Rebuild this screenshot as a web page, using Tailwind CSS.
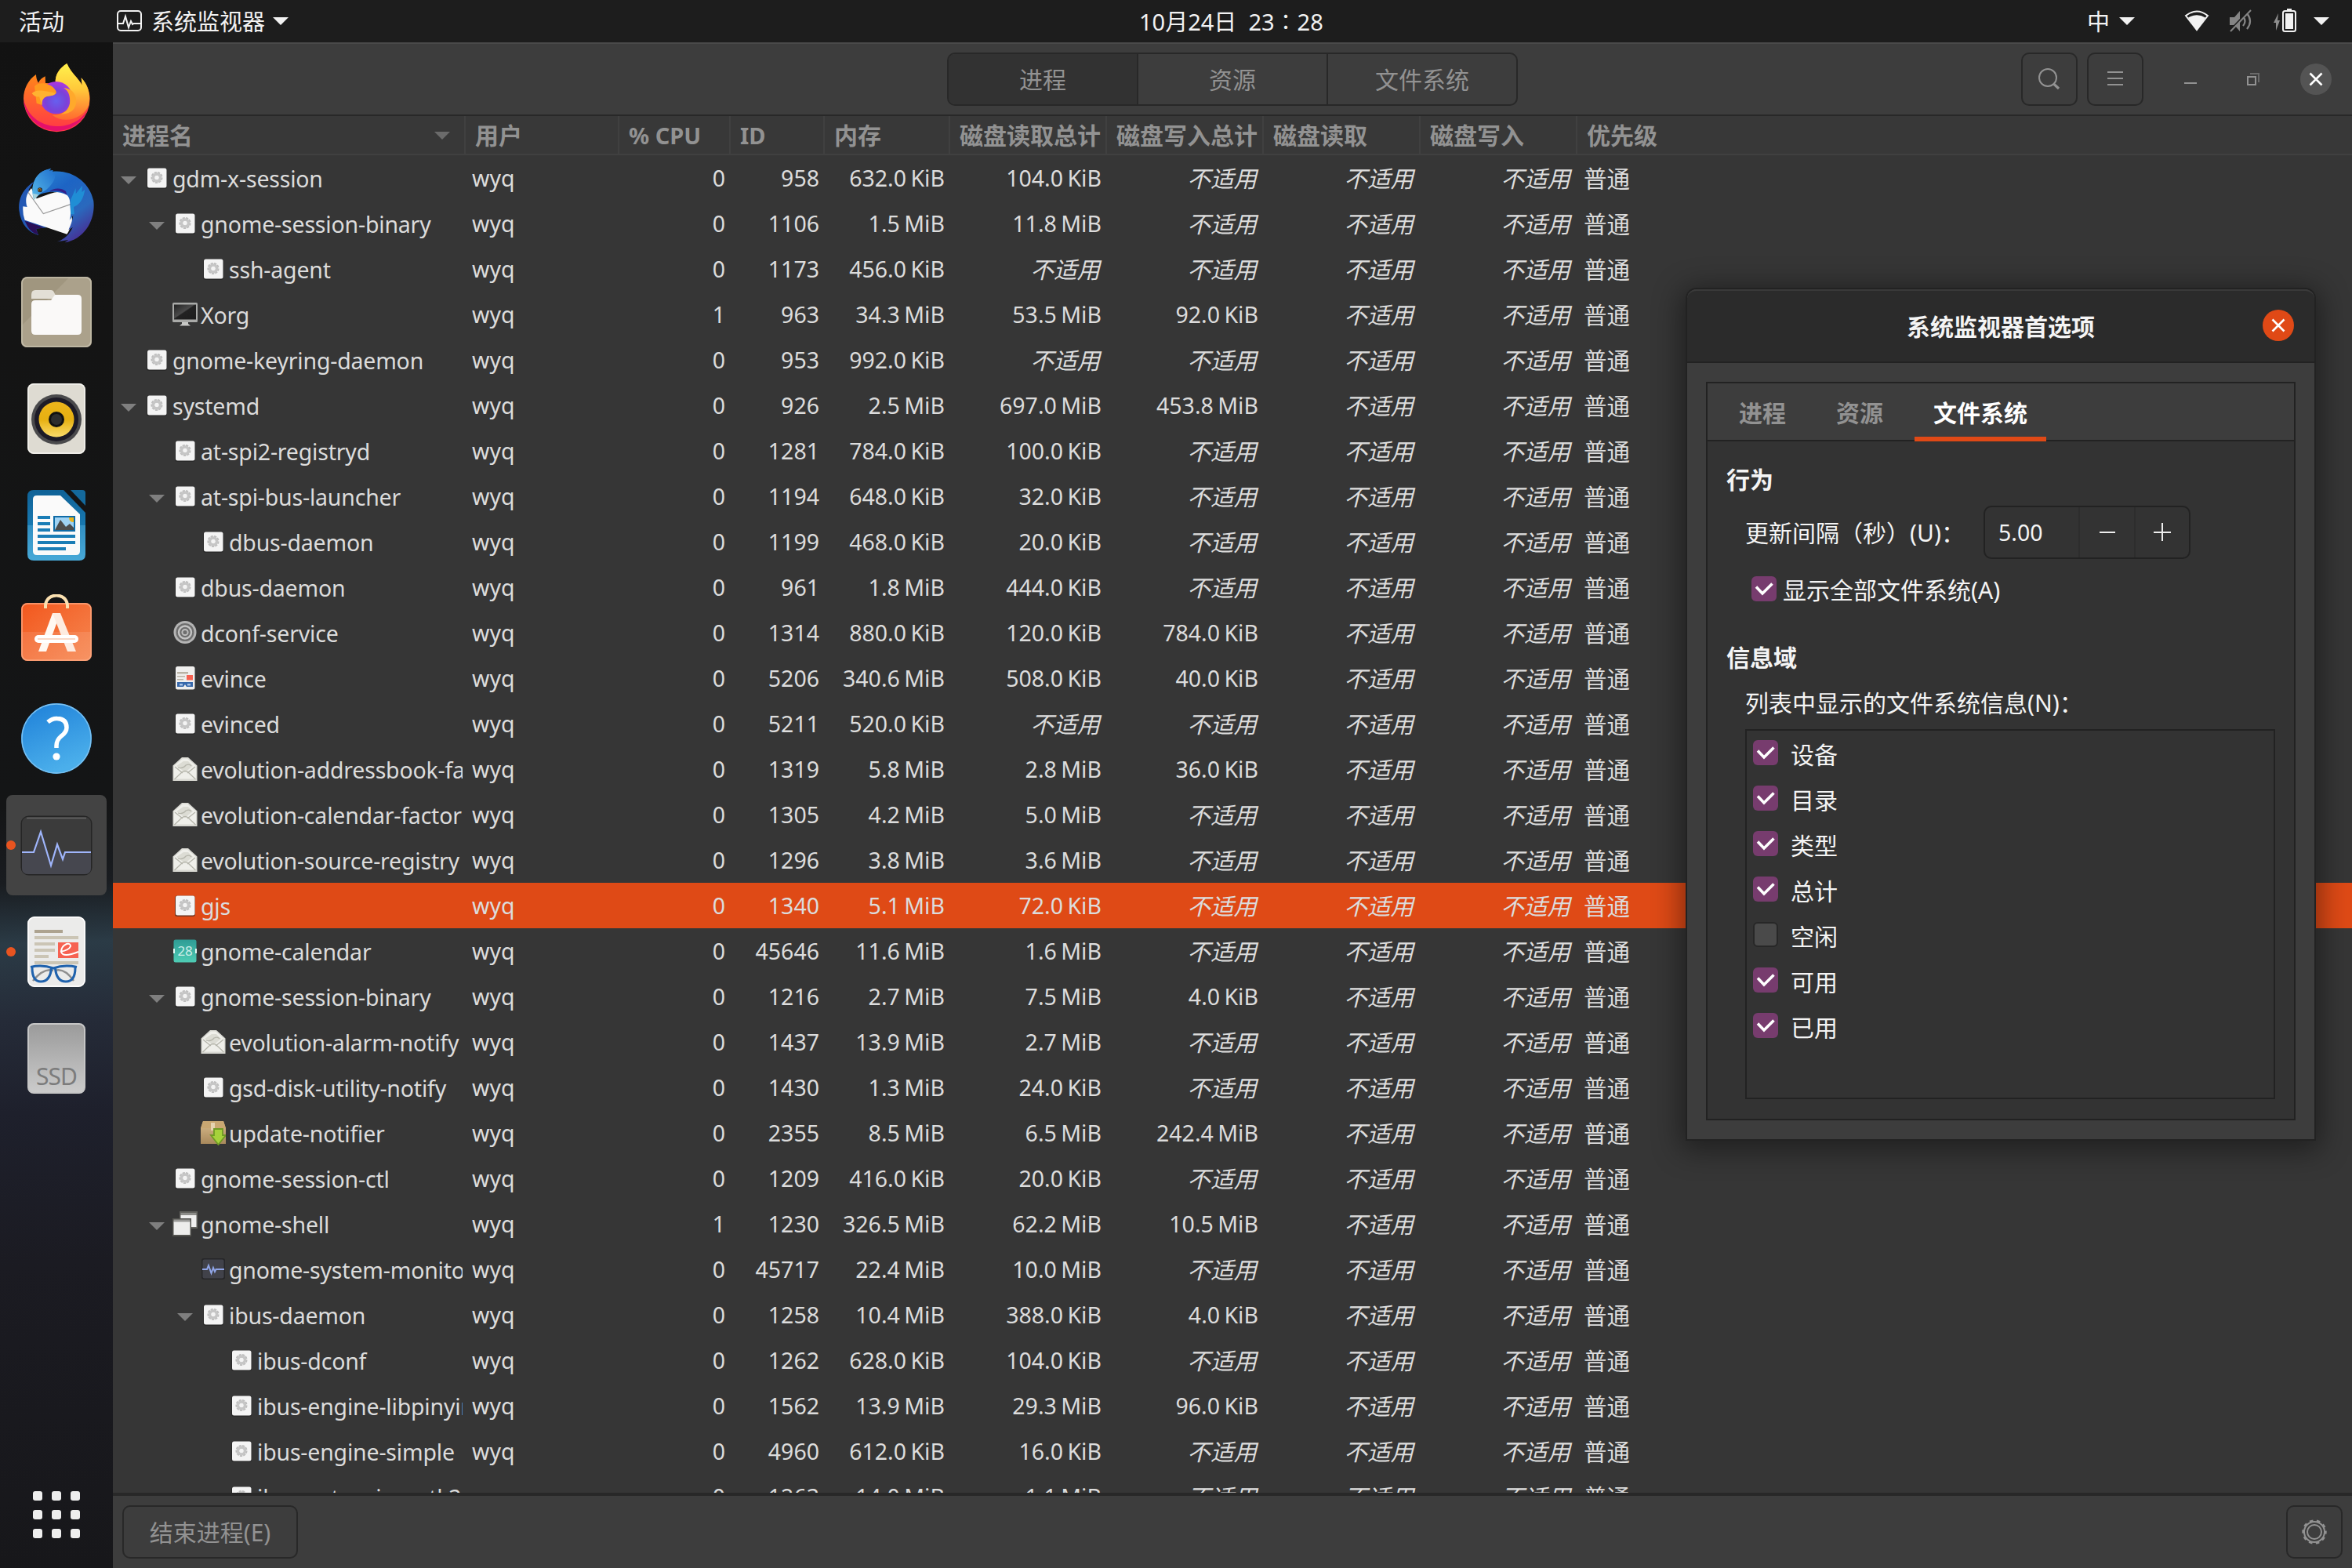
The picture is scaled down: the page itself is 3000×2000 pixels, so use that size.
<!DOCTYPE html>
<html lang="zh-CN">
<head>
<meta charset="utf-8">
<title>系统监视器</title>
<script src="https://cdn.jsdelivr.net/npm/@tailwindcss/browser@4"></script>
</head>
<body class="relative flex h-[2000px] w-[3000px] flex-col overflow-hidden bg-[#1d1d1d] font-['Noto_Sans','Noto_Sans_CJK_SC',sans-serif] text-[30px] text-[#dcdcdc]">

<!-- shared row icons -->
<svg class="absolute h-0 w-0" aria-hidden="true">
  <defs>
    <linearGradient id="gMon" x1="0" y1="0" x2="1" y2="1"><stop offset="0" stop-color="#222"/><stop offset=".45" stop-color="#4a4a4a"/><stop offset=".5" stop-color="#222"/><stop offset="1" stop-color="#1c1c1c"/></linearGradient>
    <linearGradient id="gBox" x1="0" y1="0" x2="0" y2="1"><stop offset="0" stop-color="#d9bc8c"/><stop offset="1" stop-color="#a8895c"/></linearGradient>
    <linearGradient id="gCal" x1="0" y1="0" x2="0" y2="1"><stop offset="0" stop-color="#2f9c95"/><stop offset="1" stop-color="#4fcdb5"/></linearGradient>
  </defs>
  <symbol id="i-exec" viewBox="0 0 32 32">
    <rect x="3" y="3.500" width="26" height="26.500" rx="3" fill="#222" opacity=".6"/>
    <rect x="4" y="3.500" width="24.500" height="25" rx="2.500" fill="#f4f4f4"/>
    <circle cx="16" cy="15.500" r="5.300" fill="none" stroke="#bdbdbd" stroke-width="4.500" stroke-dasharray="2.600 1"/>
    <circle cx="16" cy="15.500" r="4.500" fill="none" stroke="#c6c6c6" stroke-width="3.400"/>
  </symbol>
  <symbol id="i-screen" viewBox="0 0 32 32">
    <rect x="0" y="1" width="32" height="25" rx="1.500" fill="#a9aaa8"/>
    <rect x="2" y="3.500" width="28" height="19" fill="url(#gMon)"/>
    <path d="M12 26h8v2l3 2.500H9l3-2.500z" fill="#c8c8c6"/>
  </symbol>
  <symbol id="i-dconf" viewBox="0 0 32 32">
    <circle cx="16" cy="15.500" r="14.500" fill="#b4b4b4"/>
    <circle cx="16" cy="15.500" r="11.500" fill="#6e6e6e"/>
    <circle cx="16" cy="15.500" r="8" fill="none" stroke="#c4c4c4" stroke-width="2.400"/>
    <circle cx="16" cy="15.500" r="3.600" fill="none" stroke="#bdbdbd" stroke-width="2"/>
  </symbol>
  <symbol id="i-evince" viewBox="0 0 32 32">
    <rect x="4" y="1" width="24.500" height="29.500" rx="2.500" fill="#f0efee"/>
    <path d="M6 8h14v2.500H6zM6 13h10v1.500H6zM6 17h8v1.500H6z" fill="#b9b3a5"/>
    <rect x="18" y="12" width="8" height="6.500" fill="#f66151"/>
    <path d="M6 21h20v6h-8l-2-3-2 3H6z" fill="#3768ab"/>
    <path d="M9 23h4v2.500H9zM19 23h4v2.500h-4z" fill="#a9c2e6"/>
  </symbol>
  <symbol id="i-mail" viewBox="0 0 32 32">
    <path d="M.5 11.500 12 1h8l11.500 10.500V31H.5z" fill="#d9d9d3"/>
    <path d="M2 12 13 2.500h6L30 12v16.500H2z" fill="#efefea"/>
    <path d="M5 12 14 6h6l6 6-10 8z" fill="#dcdcd4"/>
    <path d="M7 14q6 2 10-3 5-2 7 1M2.500 29l9.500-9q4-3 8 0l9.500 9M3 13l10 8M29 13l-10 8" fill="none" stroke="#b5b5ab" stroke-width="1.300"/>
  </symbol>
  <symbol id="i-cal" viewBox="0 0 32 32">
    <rect x="1.500" y="1.500" width="29" height="29" rx="2.500" fill="url(#gCal)"/>
    <text x="16" y="21.500" text-anchor="middle" font-size="17" fill="#cfeee9">28</text>
    <path d="M2 13v6M30 13v6" stroke="#e5f6f3" stroke-width="2"/>
  </symbol>
  <symbol id="i-update" viewBox="0 0 32 32">
    <path d="M3 1h26l3 9v20H0V10z" fill="url(#gBox)"/>
    <path d="M3 1h26l3 9H0z" fill="#c9a772"/>
    <path d="M13 3h5v10h-5z" fill="#e6d3b1"/>
    <path d="M17 11h11v8h4L22.500 31 13 19h4z" fill="#a6d23b" stroke="#6f9a25" stroke-width="1.800"/>
  </symbol>
  <symbol id="i-shell" viewBox="0 0 32 32">
    <path d="M9 0h23v22H9z" fill="#62625e"/><path d="M10.500 5h20v15h-20z" fill="#efefef"/>
    <path d="M10.500 2h20v3h-20z" fill="#8d8d8a"/>
    <path d="M0 9h24v23H0z" fill="#53534f"/><path d="M1.500 13h21v17h-21z" fill="#ededec"/><path d="M1.500 10.500h21v3h-21z" fill="#9a9a98"/>
  </symbol>
  <symbol id="i-sysmon" viewBox="0 0 32 32">
    <rect x="1" y="2" width="30" height="27" rx="3" fill="#262628"/>
    <rect x="2.500" y="3.500" width="27" height="24" rx="2" fill="#41424a"/>
    <path d="M2 16h6l2-5 3.500 10 2.500-7 2 5 1.500-3H30" fill="none" stroke="#8fa4e6" stroke-width="2"/>
  </symbol>
  <symbol id="i-check" viewBox="0 0 32 32">
    <path d="M6 13.500 14 22 26.500 9.500" fill="none" stroke="#fff" stroke-width="3.600"/>
  </symbol>
</svg>

<!-- top panel -->
<header class="flex h-[54px] shrink-0 items-center bg-[#1d1d1d] text-[29px] text-[#f2f2f2]">
  <div class="flex w-[1453px] items-center pl-6">
    <span class="pt-0.5 leading-[54px]">活动</span>
    <svg class="ml-[67px] h-8 w-8" viewBox="0 0 32 32" fill="none" stroke="#f2f2f2" stroke-width="2"><rect x="1" y="3" width="30" height="25" rx="4"/><path d="M2 19h6l3-9 4 14 3-8 2 4 1.500-1H30"/></svg>
    <span class="ml-3 pt-0.5 leading-[54px]">系统监视器</span>
    <svg class="ml-2.5 h-2.5 w-5" viewBox="0 0 20 10"><path d="M0 0h20L10 10z" fill="#f2f2f2"/></svg>
  </div>
  <div class="pt-0.5 leading-[54px] whitespace-pre">10月24日  23∶28</div>
  <div class="ml-auto flex items-center pr-[29px]">
    <span class="pt-0.5 leading-[54px]">中</span>
    <svg class="ml-3 h-2.5 w-5" viewBox="0 0 20 10"><path d="M0 0h20L10 10z" fill="#f2f2f2"/></svg>
    <svg class="ml-[63px] h-8 w-8" viewBox="0 0 32 32"><path d="M2 9Q16-2 30 9L16 27z" fill="none" stroke="#f2f2f2" stroke-width="2"/><path d="M5 11.500Q16 5 27 11.500L16 28z" fill="#f2f2f2"/></svg>
    <svg class="ml-[25px] h-8 w-8" viewBox="0 0 32 32"><path d="M1 11h6l7-8v26l-7-8H1z" fill="#858585"/><path d="M18 10q5 6 0 12M23 6q8 10 0 20" fill="none" stroke="#858585" stroke-width="2.200"/><path d="M26 2 0 29" stroke="#1d1d1d" stroke-width="2"/><path d="M28 2 2 29" stroke="#858585" stroke-width="2"/></svg>
    <svg class="ml-6 h-8 w-8" viewBox="0 0 32 32"><path d="M7 6 1 18h3v10l5-13H6z" fill="#8d8d8d"/><path d="M18 0h6v3h-6z" fill="#f2f2f2"/><rect x="13" y="3" width="16" height="26" rx="2.500" fill="none" stroke="#f2f2f2" stroke-width="2"/><path d="M16 6h10v20H16z" fill="#f2f2f2"/></svg>
    <svg class="ml-5 h-2.5 w-5" viewBox="0 0 20 10"><path d="M0 0h20L10 10z" fill="#f2f2f2"/></svg>
  </div>
</header>

<div class="flex min-h-0 flex-1">

<!-- dock -->
<nav class="flex w-36 shrink-0 flex-col items-center gap-2 bg-[linear-gradient(178deg,#121212_0,#141414_18%,#141516_50%,#191c20_55%,#2b3b46_59%,#252b38_64%,#1e202c_70%,#1b1b22_80%,#17171a_100%)] pt-2">
  <div class="flex h-32 w-32 items-center justify-center">
    <svg class="h-24 w-24" viewBox="72 54 288 288">
      <defs>
        <radialGradient id="ff2" cx=".5" cy=".6" r=".65"><stop offset="0" stop-color="#6660ef"/><stop offset=".5" stop-color="#7a42d8"/><stop offset="1" stop-color="#b833e0"/></radialGradient>
        <linearGradient id="ff3" x1="0" y1="0" x2="0" y2="1"><stop offset="0" stop-color="#ff980e"/><stop offset=".45" stop-color="#ff6a2a"/><stop offset="1" stop-color="#ff3647"/></linearGradient>
        <linearGradient id="ff4" x1="0" y1="0" x2="0" y2="1"><stop offset="0" stop-color="#fff24d"/><stop offset=".45" stop-color="#ffc93a"/><stop offset="1" stop-color="#ff6a2f"/></linearGradient>
      </defs>
      <path d="M138 105C108 125 90 160 90 198A127 127 0 0 0 344 198C344 168 330 138 311 118L314 146C300 118 272 100 256 63C228 80 208 108 213 140L174 138L173 112C160 118 152 126 147 137C141 128 138 115 138 105Z" fill="url(#ff3)"/>
      <path d="M256 63C228 80 208 108 213 140C250 150 268 190 268 225C250 255 220 262 200 260C250 300 320 270 340 222C348 180 335 142 311 118L314 146C300 118 272 100 256 63Z" fill="url(#ff4)"/>
      <path d="M90 200A127 127 0 0 0 340 225C322 282 262 305 215 303C152 300 105 262 90 200Z" fill="#e5106b"/>
      <circle cx="215" cy="194" r="62" fill="url(#ff2)"/>
      <path d="M132 150C150 130 190 140 205 156C213 165 218 172 214 178C205 187 195 186 182 188C165 192 158 205 161 222L140 215Z" fill="#ff9a1e"/>
      <path d="M122 178C135 160 165 166 213 176C205 187 192 187 180 188C165 192 160 205 161 222C155 205 152 196 150 190C140 192 130 188 122 178Z" fill="#ffb231"/>
      <path d="M243 157C262 165 270 190 267 215C262 238 248 252 232 256C268 258 292 240 292 205C290 175 270 158 243 157Z" fill="#ffa92b"/>
    </svg>
  </div>
  <div class="flex h-32 w-32 items-center justify-center">
    <svg class="h-24 w-24" viewBox="72 462 288 288">
      <defs>
        <linearGradient id="tb1" x1="0" y1="0" x2=".6" y2="1"><stop offset="0" stop-color="#2c8bd6"/><stop offset=".4" stop-color="#1d64c4"/><stop offset=".75" stop-color="#2a69bd"/><stop offset="1" stop-color="#43379a"/></linearGradient>
        <linearGradient id="tb2" x1="0" y1="1" x2="1" y2="0"><stop offset="0" stop-color="#57b9e8"/><stop offset="1" stop-color="#1f6fce"/></linearGradient>
      </defs>
      <path d="M130 515C90 540 68 580 73 625C80 680 110 710 147 720L138 695L180 690L120 600L110 545Z" fill="#2258b4"/>
      <path d="M95 665C110 700 125 712 147 718L137 696L168 690Z" fill="#2a0f57"/>
      <path d="M120 540C98 565 96 590 104 612L88 610Q86 640 95 662L256 716Q268 700 276 670L272 566Q230 545 190 562L140 580Z" fill="#fafafa"/>
      <path d="M108 556 166 638 272 601" fill="none" stroke="#9a9a9a" stroke-width="3.500"/>
      <path d="M130 576C128 560 122 548 128 522C136 492 160 470 196 465L188 473L203 472L200 476C280 468 345 520 358 590C366 660 325 735 248 748L262 738L219 745C250 735 268 712 278 690L262 700C272 680 276 665 280 645L266 662C274 640 268 620 268 600C268 580 262 572 256 566C225 550 170 548 130 576Z" fill="url(#tb1)"/>
      <path d="M188 554C215 545 240 552 256 566L252 552C235 538 205 538 188 554Z" fill="#33208a"/>
      <path d="M130 584C122 560 122 540 128 522C136 492 160 470 196 465L188 473L203 472L200 480C230 490 190 545 160 556Z" fill="url(#tb2)"/>
      <path d="M270 585 290 540 290 562 315 530 313 555 325 545C318 590 300 605 282 612L284 640 270 640Z" fill="#1f9bdc" opacity=".75"/>
      <path d="M126 560 147 565 129 587Z" fill="#a9d3dc"/>
      <circle cx="153" cy="547" r="9" fill="#1b1b2b"/><circle cx="152" cy="547" r="6" fill="#d9982a"/><circle cx="152" cy="547" r="3.500" fill="#111"/>
    </svg>
  </div>
  <div class="flex h-32 w-32 items-center justify-center">
    <svg class="h-24 w-24" viewBox="0 0 96 96">
      <rect x="3" y="3" width="90" height="90" rx="8" fill="#a0967f"/><path d="M65 3H85q8 0 8 8V85q0 8-8 8H11q-8 0-8-8V66z" fill="#aba18b"/>
      <rect x="4" y="4" width="88" height="88" rx="7" fill="none" stroke="#c4bdab" stroke-width="1.500"/>
      <path d="M16 26q0-6 5-6h20q3 0 4 3l4 8H16z" fill="#e3dfd6"/>
      <path d="M16 38q0-5 5-5h20l5-7h29q5 0 5 5v41q0 5-5 5H21q-5 0-5-5z" fill="#faf9f8"/>
    </svg>
  </div>
  <div class="flex h-32 w-32 items-center justify-center">
    <svg class="h-24 w-24" viewBox="0 0 96 96">
      <defs><linearGradient id="rb" x1="0" y1="0" x2="0" y2="1"><stop offset="0" stop-color="#edb51b"/><stop offset=".5" stop-color="#e6b011"/><stop offset="1" stop-color="#fbdc6a"/></linearGradient></defs>
      <rect x="11" y="3" width="74" height="90" rx="8" fill="#dedbd2"/><rect x="12" y="4" width="72" height="88" rx="7" fill="none" stroke="#f4f2ee" stroke-width="1.500"/>
      <circle cx="48" cy="49" r="32" fill="#4a4a4c"/><circle cx="48" cy="49" r="28" fill="#1d1b26"/><circle cx="48" cy="49" r="22.500" fill="url(#rb)"/>
      <circle cx="48" cy="49" r="10" fill="#111"/><circle cx="48" cy="49" r="7" fill="#2d2d2d"/>
    </svg>
  </div>
  <div class="flex h-32 w-32 items-center justify-center">
    <svg class="h-24 w-24" viewBox="0 0 96 96">
      <defs><linearGradient id="wr" x1="0" y1="0" x2="0" y2="1"><stop offset="0" stop-color="#0f6297"/><stop offset=".5" stop-color="#1878b0"/><stop offset=".5" stop-color="#318fc2"/><stop offset="1" stop-color="#48a9d8"/></linearGradient></defs>
      <path d="M11 11q0-8 8-8H57L85 32V85q0 8-8 8H19q-8 0-8-8z" fill="url(#wr)"/>
      <path d="M66 3H81q4 0 4 4V23z" fill="#14699c"/>
      <path d="M18 15q0-5 5-5H53L78 34V81q0 5-5 5H23q-5 0-5-5z" fill="#fafafa"/>
      <path d="M24 36h16v4H24zM24 44h16v4H24zM24 52h16v4H24zM24 60h48v4H24zM24 68h48v4H24zM24 76h36v4H24z" fill="#1a7db6"/>
      <path d="M44 36h28v20H44z" fill="#0f6ba6"/><path d="M46 38h24v16H46z" fill="#9fd2f3"/><path d="M46 54l7-13 7 9 5-4 5 5v3z" fill="#4c4c4c"/><path d="M64 38h6v6q-6 0-6-6z" fill="#e9b41c"/>
    </svg>
  </div>
  <div class="flex h-32 w-32 items-center justify-center">
    <svg class="h-24 w-24" viewBox="0 0 96 96">
      <defs><linearGradient id="sw" x1="0" y1="0" x2="1" y2="1"><stop offset="0" stop-color="#f2571d"/><stop offset="1" stop-color="#f68852"/></linearGradient></defs>
      <rect x="3" y="11" width="90" height="74" rx="8" fill="url(#sw)"/><path d="M3 48h90v29q0 8-8 8H11q-8 0-8-8z" fill="#fff" opacity=".1"/>
      <rect x="4" y="12" width="88" height="72" rx="7" fill="none" stroke="#fba47c" stroke-width="1.500"/>
      <path d="M34 18v-3C34-3 62-3 62 15v3" fill="none" stroke="#fbe0b0" stroke-width="4"/>
      <path d="M43 24h10L35 73H25z" fill="#fff8f2"/><path d="M43 24h10l20 49H62z" fill="#fdebe0"/>
      <rect x="20" y="52" width="56" height="10" rx="5" fill="#fff"/><path d="M24 57h48" stroke="#f9d9c8" stroke-width="2"/>
    </svg>
  </div>
  <div class="flex h-32 w-32 items-center justify-center">
    <svg class="h-24 w-24" viewBox="0 0 96 96">
      <defs><linearGradient id="hp" x1="0" y1="0" x2=".4" y2="1"><stop offset="0" stop-color="#1d7fd8"/><stop offset="1" stop-color="#4bafeb"/></linearGradient></defs>
      <circle cx="48" cy="48" r="45" fill="url(#hp)"/><circle cx="48" cy="48" r="44" fill="none" stroke="#7cc1f0" stroke-width="1.300"/>
      <path d="M37 27Q43 22 49 22.500Q61 23 61 34Q61 40 54 45Q48 50 48 57V60" fill="none" stroke="#fff" stroke-width="5.500"/><circle cx="48" cy="71" r="4.600" fill="#fff"/>
    </svg>
  </div>
  <div class="relative flex h-32 w-32 items-center justify-center rounded-lg bg-[#434343]">
    <i class="absolute left-0 h-3 w-3 rounded-full bg-[#e95420]"></i>
    <svg class="h-24 w-24" viewBox="0 0 96 96">
      <rect x="2.500" y="10.500" width="91" height="76" rx="10" fill="#252525"/><rect x="4" y="12" width="88" height="73" rx="8" fill="#3b3b3b"/>
      <path d="M4 57h15l9-26 13 43 8-27 7 18 3-8h33v20q0 8-8 8H12q-8 0-8-8z" fill="#46474f"/>
      <path d="M4 57h15l9-26 13 43 8-27 7 19 3-9h33" fill="none" stroke="#9fb5fb" stroke-width="2.200"/>
      <path d="M10 13.500h76" stroke="#666" stroke-width="1.500"/>
    </svg>
  </div>
  <div class="relative flex h-32 w-32 items-center justify-center">
    <i class="absolute left-0 h-3 w-3 rounded-full bg-[#e95420]"></i>
    <svg class="h-24 w-24" viewBox="0 0 96 96">
      <rect x="11" y="3" width="74" height="90" rx="9" fill="#ebebea"/><rect x="12" y="4" width="72" height="88" rx="8" fill="none" stroke="#fff" stroke-width="1.500"/>
      <path d="M20 20h36v4H20z" fill="#ada390"/><path d="M20 28h56v4H20zM20 36h26v4H20zM20 44h26v4H20zM20 52h18v4H20zM20 60h56v4H20z" fill="#cbc5b5"/>
      <path d="M50 36h26v20H50z" fill="#f66151"/><path d="M53 48Q64 46 66 41Q66 37 61 38Q54 41 54 48Q56 56 76 48" fill="none" stroke="#fff" stroke-width="2"/>
      <path d="M18 85Q32 68 44 72M70 85Q58 68 46 72" fill="none" stroke="#8f8f8f" stroke-width="2.500"/>
      <path d="M15 67.500Q30 64 44 69Q58 64 74 67.500M17 68Q17 86 28 86Q40 86 41.500 69M72 68Q72 86 60 86Q48 86 46.500 69" fill="none" stroke="#1f62ad" stroke-width="3"/>
    </svg>
  </div>
  <div class="flex h-32 w-32 items-center justify-center">
    <div class="mx-auto flex h-[90px] w-[74px] items-end justify-center rounded-lg border-2 border-[#c6c6c6] bg-linear-to-b from-[#9b9b9b] to-[#cbcbcb] pb-0.5 text-[30px] leading-9 tracking-[-1px] text-[#7c7c7c]">SSD</div>
  </div>
  <div class="mt-auto mb-[38px] grid grid-cols-3 gap-3">
    <i class="h-3 w-3 rounded-[3px] bg-[#eee]"></i><i class="h-3 w-3 rounded-[3px] bg-[#eee]"></i><i class="h-3 w-3 rounded-[3px] bg-[#eee]"></i>
    <i class="h-3 w-3 rounded-[3px] bg-[#eee]"></i><i class="h-3 w-3 rounded-[3px] bg-[#eee]"></i><i class="h-3 w-3 rounded-[3px] bg-[#eee]"></i>
    <i class="h-3 w-3 rounded-[3px] bg-[#eee]"></i><i class="h-3 w-3 rounded-[3px] bg-[#eee]"></i><i class="h-3 w-3 rounded-[3px] bg-[#eee]"></i>
  </div>
</nav>

<!-- main window -->
<main class="flex min-w-0 flex-1 flex-col bg-[#3d3d3d]">
  <div class="flex h-[94px] shrink-0 items-center border-t-2 border-b-2 border-t-[#4a4a4a] border-b-[#282828] pr-[26px] text-[#929292]">
    <div class="ml-[1064px] flex h-[68px] w-[728px] overflow-hidden rounded-[10px] border-2 border-[#282828]">
      <div class="flex flex-1 items-center justify-center border-r-2 border-[#282828] bg-[#323232]">进程</div>
      <div class="flex flex-1 items-center justify-center border-r-2 border-[#282828]">资源</div>
      <div class="flex flex-1 items-center justify-center">文件系统</div>
    </div>
    <div class="ml-auto flex items-center">
      <div class="flex h-[68px] w-[72px] items-center justify-center rounded-[10px] border-2 border-[#282828]">
        <svg class="h-8 w-8" viewBox="0 0 32 32" fill="none" stroke="#929292"><circle cx="14" cy="14" r="11" stroke-width="2"/><path d="m21.500 22 6.500 6" stroke-width="3.200"/></svg>
      </div>
      <div class="ml-3 flex h-[68px] w-[72px] items-center justify-center rounded-[10px] border-2 border-[#282828]">
        <svg class="h-8 w-8" viewBox="0 0 32 32"><path d="M6 6h20v2H6zM6 14h20v2H6zM6 22h20v2H6z" fill="#929292"/></svg>
      </div>
      <svg class="ml-11 h-8 w-8" viewBox="0 0 32 32"><path d="M8 20h16v2H8z" fill="#929292"/></svg>
      <svg class="ml-12 h-8 w-8" viewBox="0 0 32 32" fill="none" stroke-width="2"><path d="M9 13h10v10H9z" stroke="#929292"/><path d="M12 9h11v11" stroke="#6a6a6a"/></svg>
      <div class="ml-11 flex h-10 w-10 items-center justify-center rounded-full bg-[#545454]">
        <svg class="h-5 w-5" viewBox="0 0 20 20" stroke="#fff" stroke-width="2.600"><path d="m2.500 2.500 15 15m0-15-15 15"/></svg>
      </div>
    </div>
  </div>

  <div class="grid h-[50px] shrink-0 grid-cols-[450px_196px_142px_120px_160px_200px_200px_200px_200px_1fr] border-b-2 border-[#404040] bg-[#383838] font-bold leading-[49px] whitespace-nowrap text-[#929292]">
    <div class="flex items-center justify-between border-r-2 border-[#404040] pr-[18px] pl-3">进程名<svg class="h-2.5 w-5" viewBox="0 0 20 10"><path d="M0 0h20L10 10z" fill="#6b6b6b"/></svg></div>
    <div class="border-r-2 border-[#404040] pl-3">用户</div>
    <div class="border-r-2 border-[#404040] pl-3 text-[29px]">% CPU</div>
    <div class="border-r-2 border-[#404040] pl-3 text-[29px]">ID</div>
    <div class="border-r-2 border-[#404040] pl-3">内存</div>
    <div class="border-r-2 border-[#404040] pl-3">磁盘读取总计</div>
    <div class="border-r-2 border-[#404040] pl-3">磁盘写入总计</div>
    <div class="border-r-2 border-[#404040] pl-3">磁盘读取</div>
    <div class="border-r-2 border-[#404040] pl-3">磁盘写入</div>
    <div class="pl-3">优先级</div>
  </div>

  <div id="rows" class="h-[1706px] shrink-0 overflow-hidden bg-[#363636]"></div>

  <div class="flex flex-1 items-center justify-between border-t-4 border-[#282828] px-3">
    <div class="flex h-[68px] w-[224px] items-center justify-center rounded-[10px] border-2 border-[#282828] text-[#929292]">结束进程(E)</div>
    <div class="flex h-[68px] w-[72px] items-center justify-center rounded-[10px] border-2 border-[#282828]">
      <svg class="h-8 w-8" viewBox="0 0 32 32" fill="none" stroke="#929292"><circle cx="16" cy="16" r="9" stroke-width="2"/><circle cx="16" cy="16" r="13" stroke-width="2"/><circle cx="16" cy="16" r="14.200" stroke-width="3" stroke-dasharray="4.460 4.460" stroke-dashoffset="2"/></svg>
    </div>
  </div>
</main>
</div>

<!-- preferences dialog -->
<section class="absolute top-[367px] left-[2150px] flex h-[1088px] w-[804px] flex-col rounded-t-[14px] border-2 border-[#222] bg-[#3d3d3d] text-[#f4f4f4] shadow-[0_6px_36px_6px_rgba(0,0,0,0.42)]">
  <div class="grid h-[94px] shrink-0 grid-cols-[1fr_auto_1fr] items-center rounded-t-xl border-t-2 border-b-2 border-t-[#3a3a3a] border-b-[#222] bg-[#2b2b2b]">
    <span></span>
    <h1 class="font-bold">系统监视器首选项</h1>
    <div class="mr-[26px] mb-0.5 flex h-10 w-10 items-center justify-center justify-self-end rounded-full bg-[#e04916]">
      <svg class="h-5 w-5" viewBox="0 0 20 20" stroke="#fff" stroke-width="2.600"><path d="m2.500 2.500 15 15m0-15-15 15"/></svg>
    </div>
  </div>
  <div class="m-6 flex flex-1 flex-col border-2 border-[#222] bg-[#333]">
    <div class="flex h-[74px] shrink-0 border-b-2 border-[#222] bg-[#3d3d3d] pl-4 font-bold text-[#929292]">
      <div class="flex w-[108px] items-center justify-center pt-0.5">进程</div>
      <div class="ml-4 flex w-[108px] items-center justify-center pt-0.5">资源</div>
      <div class="-mb-0.5 ml-4 flex w-[168px] items-center justify-center border-b-6 border-[#e04916] pt-1.5 text-white">文件系统</div>
    </div>
    <div class="flex flex-1 flex-col px-6 pb-6">
      <h2 class="mt-[25px] h-12 leading-[48px] font-bold">行为</h2>
      <div class="mt-[9px] flex h-[68px] items-center pl-6">
        <span class="w-[304px] whitespace-nowrap">更新间隔（秒）(U)：</span>
        <div class="flex h-[68px] w-[264px] rounded-[10px] border-2 border-[#222]">
          <div class="flex w-[121px] items-center border-r-2 border-[#2d2d2d] pl-[17px] text-[28.5px]">5.00</div>
          <div class="flex w-[71px] items-center justify-center border-r-2 border-[#2d2d2d]"><svg class="h-8 w-8" viewBox="0 0 32 32"><path d="M6 15h20v2H6z" fill="#eee"/></svg></div>
          <div class="flex flex-1 items-center justify-center"><svg class="h-8 w-8" viewBox="0 0 32 32"><path d="M5 15h22v2H5zM15 4h2v23h-2z" fill="#eee"/></svg></div>
        </div>
      </div>
      <div class="mt-[14px] flex h-12 items-center gap-2 pl-8">
        <span class="h-8 w-8 rounded-md bg-[#773c6e]"><svg class="h-8 w-8"><use href="#i-check"/></svg></span>
        <span class="pt-[3px] leading-[48px]">显示全部文件系统(A)</span>
      </div>
      <h2 class="mt-10 h-12 leading-[48px] font-bold">信息域</h2>
      <p class="mt-2.5 h-12 pl-6 leading-[48px]">列表中显示的文件系统信息(N)：</p>
      <div id="fields" class="mt-[9px] ml-6 h-[472px] border-2 border-[#222]"></div>
    </div>
  </div>
</section>

<script>
  const NA = null;
  // level, expander, icon, name, cpu, id, memory, read total, write total
  const rows = [
    [0,1,'exec','gdm-x-session',0,958,'632.0 KiB','104.0 KiB',NA],
    [1,1,'exec','gnome-session-binary',0,1106,'1.5 MiB','11.8 MiB',NA],
    [2,0,'exec','ssh-agent',0,1173,'456.0 KiB',NA,NA],
    [1,0,'screen','Xorg',1,963,'34.3 MiB','53.5 MiB','92.0 KiB'],
    [0,0,'exec','gnome-keyring-daemon',0,953,'992.0 KiB',NA,NA],
    [0,1,'exec','systemd',0,926,'2.5 MiB','697.0 MiB','453.8 MiB'],
    [1,0,'exec','at-spi2-registryd',0,1281,'784.0 KiB','100.0 KiB',NA],
    [1,1,'exec','at-spi-bus-launcher',0,1194,'648.0 KiB','32.0 KiB',NA],
    [2,0,'exec','dbus-daemon',0,1199,'468.0 KiB','20.0 KiB',NA],
    [1,0,'exec','dbus-daemon',0,961,'1.8 MiB','444.0 KiB',NA],
    [1,0,'dconf','dconf-service',0,1314,'880.0 KiB','120.0 KiB','784.0 KiB'],
    [1,0,'evince','evince',0,5206,'340.6 MiB','508.0 KiB','40.0 KiB'],
    [1,0,'exec','evinced',0,5211,'520.0 KiB',NA,NA],
    [1,0,'mail','evolution-addressbook-fa',0,1319,'5.8 MiB','2.8 MiB','36.0 KiB'],
    [1,0,'mail','evolution-calendar-factor',0,1305,'4.2 MiB','5.0 MiB',NA],
    [1,0,'mail','evolution-source-registry',0,1296,'3.8 MiB','3.6 MiB',NA],
    [1,0,'exec','gjs',0,1340,'5.1 MiB','72.0 KiB',NA],
    [1,0,'cal','gnome-calendar',0,45646,'11.6 MiB','1.6 MiB',NA],
    [1,1,'exec','gnome-session-binary',0,1216,'2.7 MiB','7.5 MiB','4.0 KiB'],
    [2,0,'mail','evolution-alarm-notify',0,1437,'13.9 MiB','2.7 MiB',NA],
    [2,0,'exec','gsd-disk-utility-notify',0,1430,'1.3 MiB','24.0 KiB',NA],
    [2,0,'update','update-notifier',0,2355,'8.5 MiB','6.5 MiB','242.4 MiB'],
    [1,0,'exec','gnome-session-ctl',0,1209,'416.0 KiB','20.0 KiB',NA],
    [1,1,'shell','gnome-shell',1,1230,'326.5 MiB','62.2 MiB','10.5 MiB'],
    [2,0,'sysmon','gnome-system-monito',0,45717,'22.4 MiB','10.0 MiB',NA],
    [2,1,'exec','ibus-daemon',0,1258,'10.4 MiB','388.0 KiB','4.0 KiB'],
    [3,0,'exec','ibus-dconf',0,1262,'628.0 KiB','104.0 KiB',NA],
    [3,0,'exec','ibus-engine-libpinyin',0,1562,'13.9 MiB','29.3 MiB','96.0 KiB'],
    [3,0,'exec','ibus-engine-simple',0,4960,'612.0 KiB','16.0 KiB',NA],
    [3,0,'exec','ibus-extension-gtk3',0,1263,'14.0 MiB','1.1 MiB',NA],
  ];
  const cell = v => v === NA
    ? '<div class="pt-px pr-[9px] text-right text-[29.5px] tracking-normal italic">不适用</div>'
    : `<div class="pr-[7px] text-right tracking-normal [word-spacing:-2px]">${v}</div>`;
  document.getElementById('rows').innerHTML = rows.map(([lvl, exp, icon, name, cpu, id, mem, rd, wr]) => `
    <div class="grid h-[58px] grid-cols-[450px_196px_142px_120px_160px_200px_200px_200px_200px_1fr] text-[28.5px] leading-[58px] tracking-[-0.2px] whitespace-nowrap ${name === 'gjs' ? 'bg-[#df4a16]' : ''}">
      <div class="mr-1 flex items-center gap-1 overflow-hidden" style="padding-left:${4 + lvl * 36}px">
        <span class="flex w-8 shrink-0 justify-center pt-1">${exp ? '<svg class="h-2.5 w-5" viewBox="0 0 20 10"><path d="M0 0h20L10 10z" fill="#7f7f7f"/></svg>' : ''}</span>
        <svg class="mb-0.5 h-8 w-8 shrink-0"><use href="#i-${icon}"/></svg>
        <span>${name}</span>
      </div>
      <div class="pl-2 tracking-normal">wyq</div>
      ${cell(cpu)}${cell(id)}${cell(mem)}${cell(rd)}${cell(wr)}${cell(NA)}${cell(NA)}
      <div class="pt-px pl-2 text-[29.5px] tracking-normal">普通</div>
    </div>`).join('');

  const fields = [['设备',1],['目录',1],['类型',1],['总计',1],['空闲',0],['可用',1],['已用',1]];
  document.getElementById('fields').innerHTML = fields.map(([label, on]) => `
    <div class="flex h-[58px] items-center gap-4 pl-2">
      ${on ? '<span class="mb-0.5 h-8 w-8 rounded-md bg-[#773c6e]"><svg class="h-8 w-8"><use href="#i-check"/></svg></span>'
           : '<span class="mb-0.5 h-8 w-8 rounded-md border-2 border-[#272727] bg-[#4a4a4a]"></span>'}
      <span class="pt-[3px]">${label}</span>
    </div>`).join('');
</script>
</body>
</html>
